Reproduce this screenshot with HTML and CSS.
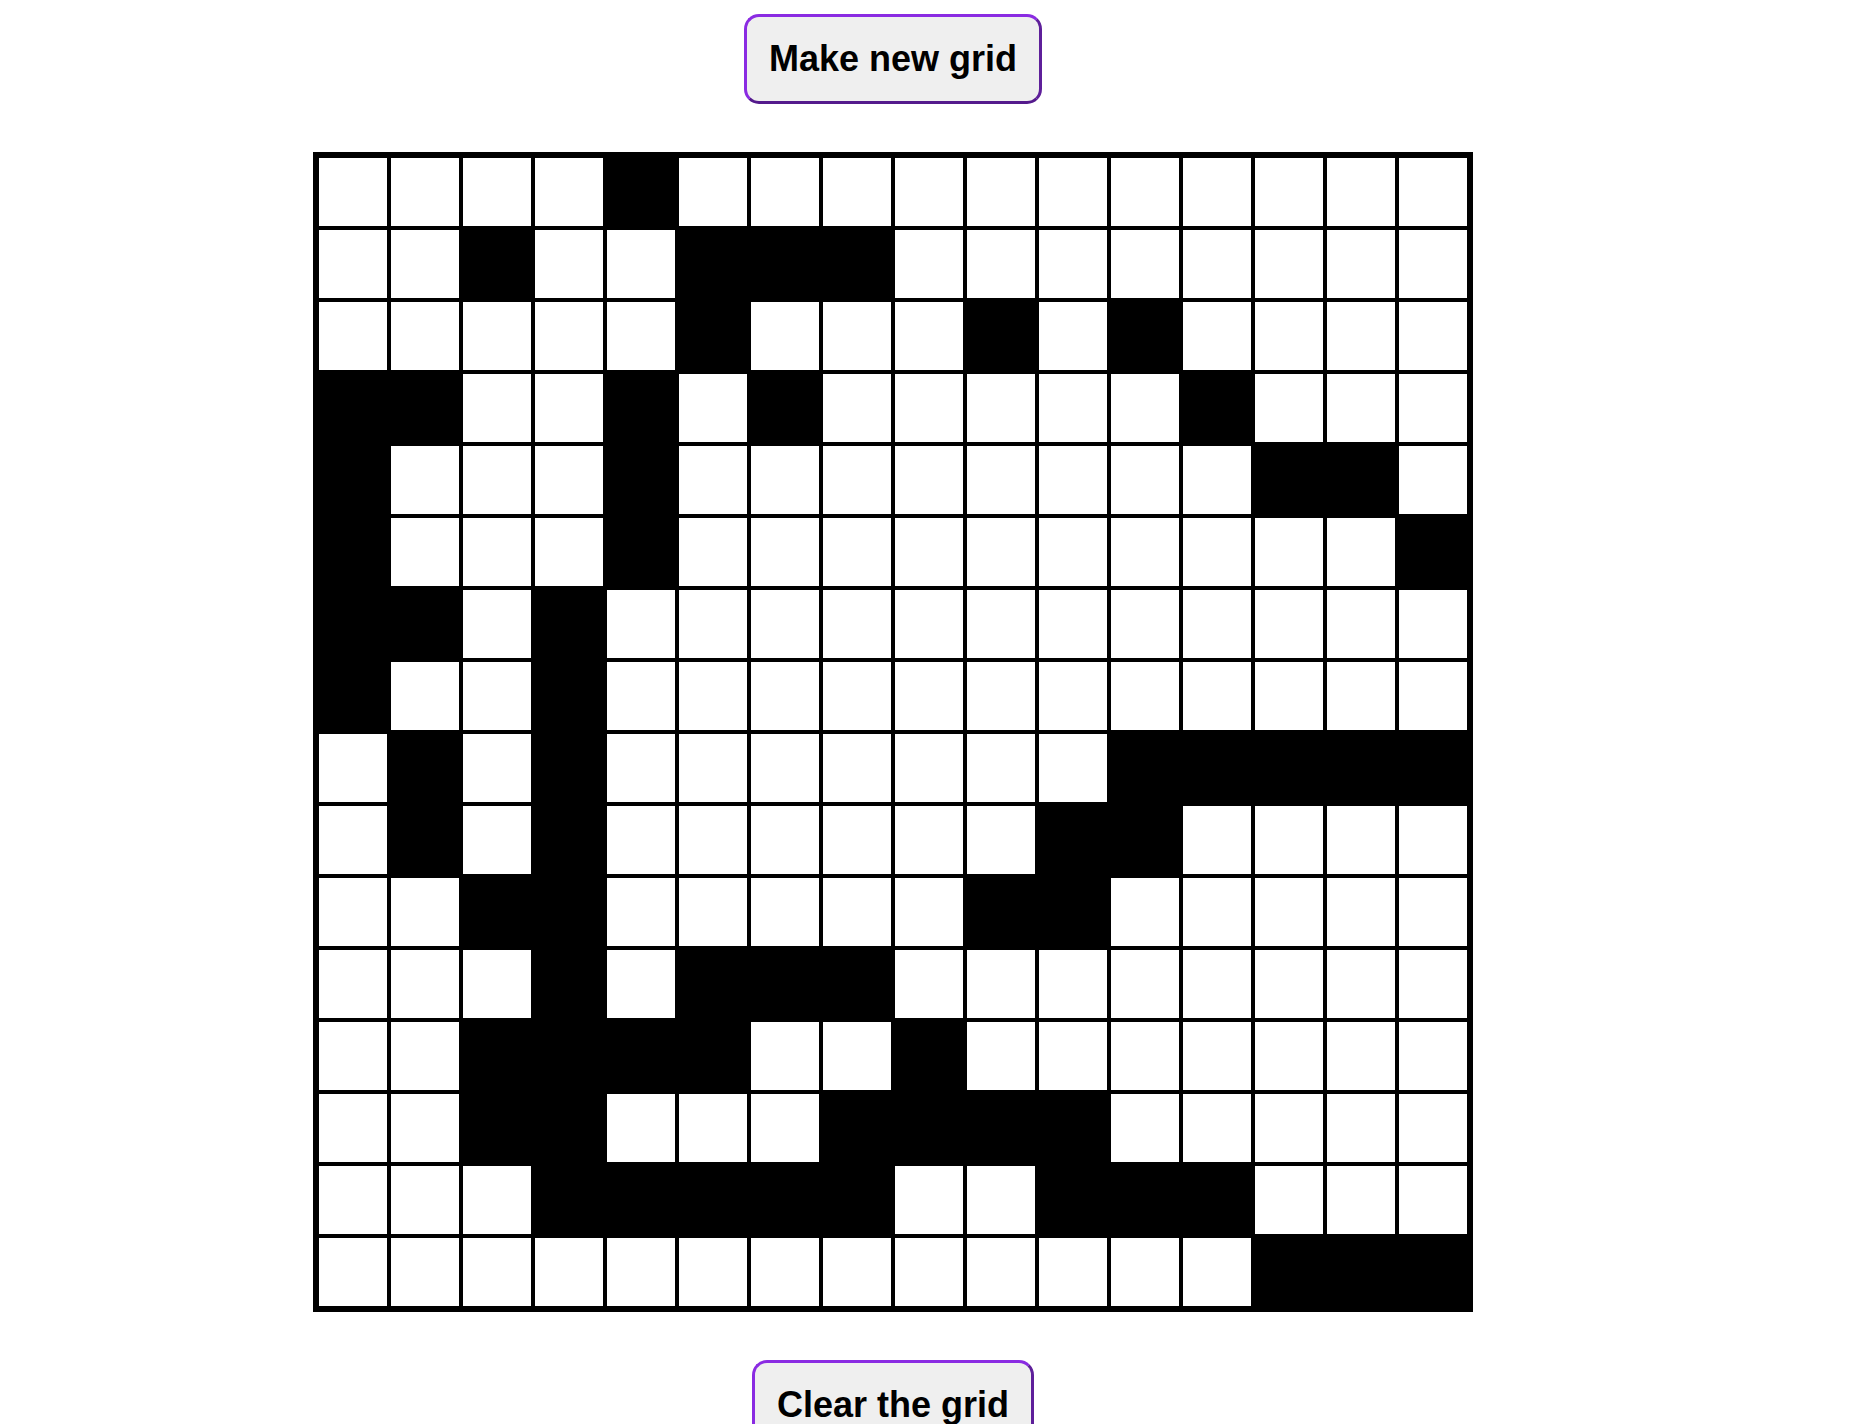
FILE: index.html
```html
<!DOCTYPE html>
<html>
<head>
<meta charset="utf-8">
<title>Grid</title>
<link rel="stylesheet" href="styles.css">
</head>
<body>
<div class="page">
  <button class="btn">Make new grid</button>
  <div class="grid">
    <div class="c"></div><div class="c"></div><div class="c"></div><div class="c"></div><div class="c b"></div><div class="c"></div><div class="c"></div><div class="c"></div><div class="c"></div><div class="c"></div><div class="c"></div><div class="c"></div><div class="c"></div><div class="c"></div><div class="c"></div><div class="c"></div>
    <div class="c"></div><div class="c"></div><div class="c b"></div><div class="c"></div><div class="c"></div><div class="c b"></div><div class="c b"></div><div class="c b"></div><div class="c"></div><div class="c"></div><div class="c"></div><div class="c"></div><div class="c"></div><div class="c"></div><div class="c"></div><div class="c"></div>
    <div class="c"></div><div class="c"></div><div class="c"></div><div class="c"></div><div class="c"></div><div class="c b"></div><div class="c"></div><div class="c"></div><div class="c"></div><div class="c b"></div><div class="c"></div><div class="c b"></div><div class="c"></div><div class="c"></div><div class="c"></div><div class="c"></div>
    <div class="c b"></div><div class="c b"></div><div class="c"></div><div class="c"></div><div class="c b"></div><div class="c"></div><div class="c b"></div><div class="c"></div><div class="c"></div><div class="c"></div><div class="c"></div><div class="c"></div><div class="c b"></div><div class="c"></div><div class="c"></div><div class="c"></div>
    <div class="c b"></div><div class="c"></div><div class="c"></div><div class="c"></div><div class="c b"></div><div class="c"></div><div class="c"></div><div class="c"></div><div class="c"></div><div class="c"></div><div class="c"></div><div class="c"></div><div class="c"></div><div class="c b"></div><div class="c b"></div><div class="c"></div>
    <div class="c b"></div><div class="c"></div><div class="c"></div><div class="c"></div><div class="c b"></div><div class="c"></div><div class="c"></div><div class="c"></div><div class="c"></div><div class="c"></div><div class="c"></div><div class="c"></div><div class="c"></div><div class="c"></div><div class="c"></div><div class="c b"></div>
    <div class="c b"></div><div class="c b"></div><div class="c"></div><div class="c b"></div><div class="c"></div><div class="c"></div><div class="c"></div><div class="c"></div><div class="c"></div><div class="c"></div><div class="c"></div><div class="c"></div><div class="c"></div><div class="c"></div><div class="c"></div><div class="c"></div>
    <div class="c b"></div><div class="c"></div><div class="c"></div><div class="c b"></div><div class="c"></div><div class="c"></div><div class="c"></div><div class="c"></div><div class="c"></div><div class="c"></div><div class="c"></div><div class="c"></div><div class="c"></div><div class="c"></div><div class="c"></div><div class="c"></div>
    <div class="c"></div><div class="c b"></div><div class="c"></div><div class="c b"></div><div class="c"></div><div class="c"></div><div class="c"></div><div class="c"></div><div class="c"></div><div class="c"></div><div class="c"></div><div class="c b"></div><div class="c b"></div><div class="c b"></div><div class="c b"></div><div class="c b"></div>
    <div class="c"></div><div class="c b"></div><div class="c"></div><div class="c b"></div><div class="c"></div><div class="c"></div><div class="c"></div><div class="c"></div><div class="c"></div><div class="c"></div><div class="c b"></div><div class="c b"></div><div class="c"></div><div class="c"></div><div class="c"></div><div class="c"></div>
    <div class="c"></div><div class="c"></div><div class="c b"></div><div class="c b"></div><div class="c"></div><div class="c"></div><div class="c"></div><div class="c"></div><div class="c"></div><div class="c b"></div><div class="c b"></div><div class="c"></div><div class="c"></div><div class="c"></div><div class="c"></div><div class="c"></div>
    <div class="c"></div><div class="c"></div><div class="c"></div><div class="c b"></div><div class="c"></div><div class="c b"></div><div class="c b"></div><div class="c b"></div><div class="c"></div><div class="c"></div><div class="c"></div><div class="c"></div><div class="c"></div><div class="c"></div><div class="c"></div><div class="c"></div>
    <div class="c"></div><div class="c"></div><div class="c b"></div><div class="c b"></div><div class="c b"></div><div class="c b"></div><div class="c"></div><div class="c"></div><div class="c b"></div><div class="c"></div><div class="c"></div><div class="c"></div><div class="c"></div><div class="c"></div><div class="c"></div><div class="c"></div>
    <div class="c"></div><div class="c"></div><div class="c b"></div><div class="c b"></div><div class="c"></div><div class="c"></div><div class="c"></div><div class="c b"></div><div class="c b"></div><div class="c b"></div><div class="c b"></div><div class="c"></div><div class="c"></div><div class="c"></div><div class="c"></div><div class="c"></div>
    <div class="c"></div><div class="c"></div><div class="c"></div><div class="c b"></div><div class="c b"></div><div class="c b"></div><div class="c b"></div><div class="c b"></div><div class="c"></div><div class="c"></div><div class="c b"></div><div class="c b"></div><div class="c b"></div><div class="c"></div><div class="c"></div><div class="c"></div>
    <div class="c"></div><div class="c"></div><div class="c"></div><div class="c"></div><div class="c"></div><div class="c"></div><div class="c"></div><div class="c"></div><div class="c"></div><div class="c"></div><div class="c"></div><div class="c"></div><div class="c"></div><div class="c b"></div><div class="c b"></div><div class="c b"></div>
  </div>
  <button class="btn">Clear the grid</button>
</div>
</body>
</html>
```

FILE: styles.css
```css
html, body {
  margin: 0;
  padding: 0;
  background: #ffffff;
}

.page {
  width: 1786px;
  padding-top: 14px;
  display: flex;
  flex-direction: column;
  align-items: center;
  gap: 48px;
}

.btn {
  font-family: "Liberation Sans", Arial, sans-serif;
  font-weight: bold;
  font-size: 36px;
  line-height: 42px;
  color: #000;
  background: #efefef;
  padding: 21px 22px;
  border: 3px solid;
  border-color: #8a2be2 #5e1f9a #541a8c #8a2be2;
  border-radius: 15px;
  cursor: pointer;
}

.grid {
  display: grid;
  grid-template-columns: repeat(16, 72px);
  grid-auto-rows: 72px;
  border: 4px solid #000;
  width: 1152px;
}

.c {
  box-sizing: border-box;
  border: 2px solid #000;
  background: #fff;
}

.c.b {
  background: #000;
}
```
